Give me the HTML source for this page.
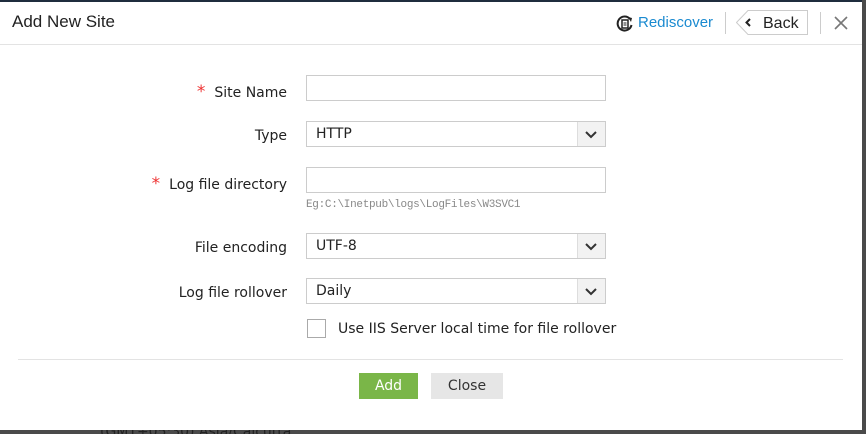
<!DOCTYPE html>
<html style="overflow:hidden;height:434px"><head><style>
body{margin:0;width:866px;height:434px;overflow:hidden;background:#4a4a4a;font-family:"Liberation Sans",sans-serif;position:relative}
.dlg{position:absolute;left:0;top:0;width:862px;height:430px;background:#fff;border-top:2px solid #1f2d3d;box-sizing:border-box}
.hdr{position:absolute;left:0;top:0;width:862px;height:42px;border-bottom:1px solid #e3e3e3}
.t{position:absolute;left:12px;top:10px;font-size:17px;color:#222}
.d{font-family:"DejaVu Sans",sans-serif}
.lbl{position:absolute;right:575px;font-size:14px;color:#222;text-align:right;white-space:nowrap;font-family:"DejaVu Sans",sans-serif}
.lbl b{color:#e33;font-weight:normal;font-size:17px;margin-right:9px}
.in{position:absolute;left:306px;width:300px;height:26px;border:1px solid #ccc;box-sizing:border-box;font-size:14px;color:#222;padding:4px 9px;font-family:"DejaVu Sans",sans-serif}
.sel .ar{position:absolute;right:0;top:0;width:27px;height:24px;border-left:1px solid #ddd;background:#f2f2f2}
</style></head><body>
<div style="position:absolute;left:0;top:0;width:866px;height:434px;overflow:hidden">
<div style="position:absolute;left:100px;top:424px;font-size:14px;line-height:16px;color:#222;font-family:'DejaVu Sans',sans-serif">(GMT+05:30) Asia/Calcutta</div>
</div>
<div class="dlg">
<div class="hdr">
<div class="t">Add New Site</div>
<svg style="position:absolute;left:616px;top:13px" width="18" height="18" viewBox="0 0 18 18"><path d="M14 4A7 7 0 1 0 15.5 10" fill="none" stroke="#222" stroke-width="2"/><path d="M12 2l4 1-1 4z" fill="#222"/><rect x="6" y="5" width="6" height="8" fill="none" stroke="#222" stroke-width="1.5"/><path d="M7.5 8h3M7.5 10h3" stroke="#222"/></svg>
<div style="position:absolute;left:638px;top:12px;font-size:15px;color:#1a8ad0">Rediscover</div>
<div style="position:absolute;left:725px;top:10px;width:1px;height:22px;background:#ccc"></div>
<svg style="position:absolute;left:736px;top:8px" width="72" height="25" viewBox="0 0 72 25"><path d="M71.5 .5H12L.5 12.5 12 24.5h59.5z" fill="#fff" stroke="#ccc"/><path d="M14 9l-3.5 3.5 3.5 3.5" fill="none" stroke="#222" stroke-width="2"/><text x="27" y="18" font-size="16" fill="#222" font-family="Liberation Sans">Back</text></svg>
<div style="position:absolute;left:820px;top:10px;width:1px;height:22px;background:#ccc"></div>
<svg style="position:absolute;left:834px;top:14px" width="14" height="14"><path d="M1 1l12 12M13 1L1 13" stroke="#777" stroke-width="1.6"/></svg>
</div>
<div class="lbl" style="top:80px"><b>*</b>Site Name</div>
<div class="in" style="top:73px"></div>
<div class="lbl" style="top:126px">Type</div>
<div class="in sel" style="top:119px">HTTP<div class="ar"><svg width="27" height="24"><path d="M8 10l5 5 5-5" fill="none" stroke="#333" stroke-width="2"/></svg></div></div>
<div class="lbl" style="top:172px"><b>*</b>Log file directory</div>
<div class="in" style="top:165px"></div>
<div style="position:absolute;left:306px;top:197px;font-size:11px;color:#888;font-family:'Liberation Mono',monospace;letter-spacing:-.3px">Eg:C:\Inetpub\logs\LogFiles\W3SVC1</div>
<div class="lbl" style="top:238px">File encoding</div>
<div class="in sel" style="top:231px">UTF-8<div class="ar"><svg width="27" height="24"><path d="M8 10l5 5 5-5" fill="none" stroke="#333" stroke-width="2"/></svg></div></div>
<div class="lbl" style="top:283px">Log file rollover</div>
<div class="in sel" style="top:276px">Daily<div class="ar"><svg width="27" height="24"><path d="M8 10l5 5 5-5" fill="none" stroke="#333" stroke-width="2"/></svg></div></div>
<div style="position:absolute;left:307px;top:317px;width:19px;height:19px;border:1px solid #aaa;box-sizing:border-box"></div>
<div class="d" style="position:absolute;left:338px;top:319px;font-size:14px;color:#222">Use IIS Server local time for file rollover</div>
<div style="position:absolute;left:18px;top:357px;width:825px;height:1px;background:#e3e3e3"></div>
<div class="d" style="position:absolute;left:359px;top:371px;width:59px;height:26px;background:#7ab648;color:#fff;font-size:14px;text-align:center;line-height:26px">Add</div>
<div class="d" style="position:absolute;left:431px;top:371px;width:72px;height:26px;background:#e6e6e6;color:#333;font-size:14px;text-align:center;line-height:26px">Close</div>
</div>
</body></html>
